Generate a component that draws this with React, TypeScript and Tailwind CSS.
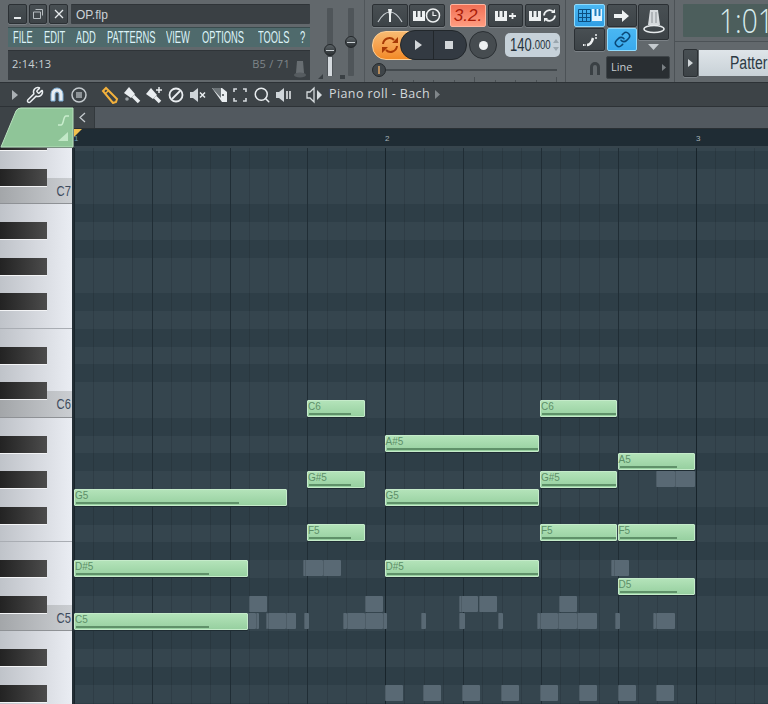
import type { ReactNode } from 'react';
import { Link, Search, Wrench } from 'lucide-react';

const STEP = 19.44;
const GRID_X = 74;
const GRID_Y = 148;

// semitones that get the lighter band, C = 0
const LIGHT = [0, 1, 3, 5, 7, 8, 10];

// top row is D#7, clipped by the ruler
const rows = Array.from({ length: 32 }, (_, i) => ((3 - i) % 12 + 12) % 12);

const whiteKeys = [
  { h: 'h-[29.5px]' },
  { h: 'h-[26.7px]', label: 'C7' },
  { h: 'h-[26.7px]' },
  { h: 'h-[35.6px]' },
  { h: 'h-[35.6px]' },
  { h: 'h-[26.7px]', line: true },
  { h: 'h-[26.7px]' },
  { h: 'h-[35.6px]' },
  { h: 'h-[26.7px]', label: 'C6' },
  { h: 'h-[26.7px]' },
  { h: 'h-[35.6px]' },
  { h: 'h-[35.6px]' },
  { h: 'h-[26.7px]', line: true },
  { h: 'h-[26.7px]' },
  { h: 'h-[35.6px]' },
  { h: 'h-[26.7px]', label: 'C5' },
  { h: 'h-[26.7px]' },
  { h: 'h-[35.6px]' },
  { h: 'h-[35.6px]' },
];

const blackTops = [133, 168.6, 221.9, 257.5, 293.1, 346.5, 382.1, 435.5, 471.1, 506.7, 560.1, 595.7, 649, 684.6];

const notes = [
  { n: 'G5', x: 74, r: 287, y: 488.6, v: 239 },
  { n: 'D#5', x: 74, r: 248, y: 560, v: 209 },
  { n: 'C5', x: 74, r: 248, y: 613.4, v: 209 },
  { n: 'C6', x: 307, r: 365, y: 400, v: 351 },
  { n: 'G#5', x: 307, r: 365, y: 471, v: 351 },
  { n: 'F5', x: 307, r: 365, y: 524.4, v: 351 },
  { n: 'A#5', x: 384.5, r: 539, y: 435.2, v: 538 },
  { n: 'G5', x: 384.5, r: 539, y: 488.6, v: 538 },
  { n: 'D#5', x: 384.5, r: 539, y: 560, v: 538 },
  { n: 'C6', x: 540, r: 617, y: 400, v: 616 },
  { n: 'G#5', x: 540, r: 617, y: 471, v: 616 },
  { n: 'F5', x: 540, r: 617, y: 524.4, v: 616 },
  { n: 'A5', x: 617.5, r: 695, y: 453, v: 677 },
  { n: 'F5', x: 617.5, r: 695, y: 524.4, v: 677 },
  { n: 'D5', x: 617.5, r: 695, y: 577.8, v: 677 },
];

// x, width, y of the ghost notes from the other channels
const ghosts = [
  [656, 19, 471], [675, 20, 471],
  [303, 3, 560], [305, 18, 560], [323, 18, 560], [611, 6, 560], [614, 15, 560],
  [249, 18, 595.6], [365, 18, 595.6], [459, 3, 595.6], [461, 17, 595.6], [479, 18, 595.6], [559, 18, 595.6],
  [248, 8, 613.4], [256, 3, 613.4], [266, 2, 613.4], [268, 18, 613.4], [286, 10, 613.4], [304, 5, 613.4],
  [343, 4, 613.4], [347, 18, 613.4], [365, 18, 613.4], [383, 4, 613.4], [421, 5, 613.4], [459, 6, 613.4],
  [498, 5, 613.4], [537, 3, 613.4], [540, 18, 613.4], [558, 19, 613.4], [577, 20, 613.4], [615, 5, 613.4],
  [653, 3, 613.4], [656, 19, 613.4],
  [384.5, 18, 684.6], [423, 18, 684.6], [462, 18, 684.6], [501, 18, 684.6], [540, 18, 684.6], [578.5, 18, 684.6], [617.5, 18, 684.6], [656, 18, 684.6],
];

const menu = [
  ['FILE', 'w-[31px]'],
  ['EDIT', 'w-[32px]'],
  ['ADD', 'w-[31px]'],
  ['PATTERNS', 'w-[59px]'],
  ['VIEW', 'w-[36px]'],
  ['OPTIONS', 'w-[56px]'],
  ['TOOLS', 'w-[42px]'],
  ['?', 'w-[10px]'],
];

function Btn({ className = '', children }: { className?: string; children?: ReactNode }) {
  return (
    <div className={`flex items-center justify-center rounded-[2px] border border-[#2b3034] bg-gradient-to-b from-[#484f53] to-[#3d4347] shadow-[0_1px_0_#7a8085] ${className}`}>
      {children}
    </div>
  );
}

function Comb() {
  return <path fill="#eef1f2" d="M0 4h3v6h1.500V4h3v6H9V4h3v10H0z" />;
}

function ToolIcon({ children, w = 18 }: { children: ReactNode; w?: number }) {
  return (
    <svg width={w} height={18} viewBox={`0 0 ${w} 18`} className="flex-none">
      {children}
    </svg>
  );
}

function Toolbar() {
  const white = '#e9edf0';
  return (
    <div className="flex h-[24px] flex-none items-center border-b border-[#2d3236] bg-[#3d4347] pl-[12px]">
      <svg width="6" height="10" viewBox="0 0 6 10"><path d="M0 0l6 5-6 5z" fill="#aab0b4" /></svg>
      <div className="ml-[8px] flex items-center gap-[4px]">
        <Wrench size={18} color={white} strokeWidth={2} className="flex-none" />
        <ToolIcon>
          <path d="M3 15V8a6 6 0 0 1 12 0v7h-4V8a2 2 0 0 0-4 0v7z" fill={white} stroke="#7fb2dc" strokeWidth="1" />
        </ToolIcon>
        <ToolIcon>
          <circle cx="9" cy="9" r="7" fill="none" stroke="#c4cace" strokeWidth="1.500" />
          <rect x="6" y="6" width="6" height="6" fill="#8e9498" />
        </ToolIcon>
      </div>
      <div className="ml-[13px] flex items-center gap-[4px]">
        <ToolIcon>
          <path d="M2 5l3-3 11 11-1 3-3 1z" fill="none" stroke="#f3b13c" strokeWidth="2" />
          <path d="M4.500 7.500l3-3" stroke="#f3b13c" strokeWidth="1.500" />
        </ToolIcon>
        <ToolIcon>
          <path d="M1 7l5-6 6 7-4 4z" fill={white} />
          <path d="M10 10l6 6" stroke={white} strokeWidth="3.500" />
          <circle cx="4" cy="13" r="1.800" fill="#9aa0a4" />
        </ToolIcon>
        <ToolIcon>
          <path d="M1 8l5-6 6 7-4 4z" fill={white} />
          <path d="M10 11l5 5" stroke={white} strokeWidth="3.500" />
          <path d="M14 1v6M11 4h6" stroke={white} strokeWidth="1.500" />
        </ToolIcon>
        <ToolIcon>
          <circle cx="9" cy="9" r="6.500" fill="none" stroke={white} strokeWidth="1.800" />
          <path d="M5 13l8-8" stroke={white} strokeWidth="1.800" />
        </ToolIcon>
        <ToolIcon>
          <path d="M1 6h3l5-4v14l-5-4H1z" fill="#cfd5d9" />
          <path d="M11 6.500l5 5M16 6.500l-5 5" stroke={white} strokeWidth="1.500" />
        </ToolIcon>
        <ToolIcon>
          <path d="M1 2h10l5 4v10h-5z" fill={white} />
          <path d="M1 2h9v10z" fill="#6d7478" />
          <circle cx="12" cy="9" r="1" fill="#3d4347" />
        </ToolIcon>
        <div className="-ml-[2px]">
          <ToolIcon>
            <path d="M3 6V3h3M12 3h3v3M15 12v3h-3M6 15H3v-3" fill="none" stroke="#d5dade" strokeWidth="1.600" />
          </ToolIcon>
        </div>
        <Search size={18} color={white} strokeWidth={2} className="flex-none" />
        <ToolIcon>
          <path d="M1 6h3l5-4v14l-5-4H1z" fill="#cfd5d9" />
          <path d="M12 5v8M15 5v8" stroke={white} strokeWidth="1.500" />
        </ToolIcon>
      </div>
      <svg width="16" height="18" viewBox="0 0 16 18" className="ml-[13px] flex-none">
        <path d="M1 6h3l4-4v14l-4-4H1z" fill="none" stroke="#d6dbde" strokeWidth="1.300" />
        <path d="M11 4l5 5-5 5z" fill="#d6dbde" />
      </svg>
      <span className="ml-[7px] font-['Open_Sans',sans-serif] text-[12.500px] tracking-[0.4px] whitespace-nowrap text-[#d3d8db]">
        Piano roll - Bach
      </span>
      <svg width="5" height="9" viewBox="0 0 5 9" className="ml-[5px]"><path d="M0 0l5 4.500-5 4.500z" fill="#80868a" /></svg>
    </div>
  );
}

function Fader({ knobTop, fill }: { knobTop: string; fill?: boolean }) {
  return (
    <div className="relative flex h-[68px] w-[6px] justify-center rounded-[1px] bg-[#4f5559]">
      {fill && <div className="absolute inset-x-[1px] bottom-0 h-[19px] bg-[#d5dade]" />}
      <div className={`absolute left-1/2 -ml-[6px] h-[12px] w-[12px] rounded-full border border-[#24282b] bg-gradient-to-b from-[#5a6165] to-[#2c3134] ${knobTop}`}>
        <div className="mx-auto mt-[4.500px] h-px w-[8px] bg-[#c8ced2]" />
      </div>
    </div>
  );
}

function TopPanel() {
  return (
    <div className="flex h-[83px] flex-none border-b border-[#2d3236] bg-[#62686c]">
      {/* title, menu and hint panel */}
      <div className="flex w-[319px] flex-none flex-col gap-[3px] pt-[4px] pl-[8px]">
        <div className="flex h-[20px] gap-[2px]">
          <Btn className="w-[19px]"><div className="mt-[7px] h-[2px] w-[7px] bg-[#e6eaec]" /></Btn>
          <Btn className="w-[18px]">
            <svg width="10" height="10" viewBox="0 0 10 10"><path d="M2.500.5h7v6M.5 3h7v6.500h-7z" fill="none" stroke="#b6bcc0" /></svg>
          </Btn>
          <Btn className="w-[19px]">
            <svg width="10" height="10" viewBox="0 0 10 10"><path d="M1 1l8 8M9 1l-8 8" stroke="#e6eaec" strokeWidth="1.300" /></svg>
          </Btn>
          <div className="ml-[1px] flex w-[239px] items-center rounded-[1px] border-t border-[#2f3438] bg-[#3a4044] pl-[5px] font-['Liberation_Sans',sans-serif] text-[12px] text-[#ccd3d7]">
            OP.flp
          </div>
        </div>
        <div className="flex h-[20px] w-[302px] items-center border-t border-[#3a4c4e] bg-[#4f6a6c] pl-[5px] font-['Liberation_Sans',sans-serif] text-[17px] text-[#dcf3f8]">
          {menu.map(([label, w]) => (
            <div key={label} className={`${w} flex-none whitespace-nowrap`}>
              <span className="inline-block origin-left scale-x-[0.55]">{label}</span>
            </div>
          ))}
        </div>
        <div className="flex h-[30px] w-[302px] items-center border-t border-[#2f3438] bg-[#3a4044] pr-[4px] pb-[2px] pl-[4px] font-['Open_Sans',sans-serif] text-[11px] tracking-[0.3px]">
          <span className="text-[#c9d0d4]">2:14:13</span>
          <span className="mr-[4px] ml-auto text-[#7f868a]">B5 / 71</span>
          <svg width="12" height="18" viewBox="0 0 12 18" className="mt-[8px]">
            <path d="M3 1h6l1 12H2z" fill="#686e72" />
            <ellipse cx="6" cy="15" rx="6" ry="2.500" fill="#565c60" />
          </svg>
        </div>
      </div>

      {/* master sliders */}
      <div className="relative flex w-[46px] flex-none gap-[15px] border-r border-[#50565a] pt-[8px] pl-[8px]">
        <Fader knobTop="top-[36px]" fill />
        <Fader knobTop="top-[28px]" />
        <svg width="5" height="5" viewBox="0 0 5 5" className="absolute bottom-[3px] -left-[1px]"><path d="M5 0v5H0z" fill="#3a4044" /></svg>
        <div className="absolute bottom-[3px] left-[21px] h-[4px] w-[5px] bg-[#3a4044]" />
      </div>

      {/* transport */}
      <div className="flex w-[201px] flex-none flex-col border-r border-[#4c5256] pt-[4px] pl-[7px]">
        <div className="flex h-[23px]">
          <Btn className="w-[36px]">
            <svg width="28" height="16" viewBox="0 0 28 16">
              <path d="M2 14C6 7 10 4 14 4s8 3 12 10" fill="none" stroke="#c6ccd0" strokeWidth="1.200" />
              <path d="M12 1h4l-1 6v7h-2V7z" fill="#eef1f2" />
            </svg>
          </Btn>
          <Btn className="ml-[1px] w-[36px]">
            <svg width="28" height="17" viewBox="0 0 28 17">
              <Comb />
              <circle cx="20" cy="8.500" r="6.500" fill="none" stroke="#eef1f2" strokeWidth="1.500" />
              <path d="M20 4.500v4h3.500" fill="none" stroke="#eef1f2" strokeWidth="1.200" />
            </svg>
          </Btn>
          <div className="ml-[5px] flex w-[36px] items-center justify-center rounded-[2px] border border-[#ffb6a0] bg-gradient-to-b from-[#ef6f55] to-[#ff9c80] font-['Liberation_Sans',sans-serif] text-[17px] text-[#a81c08] italic">
            3.2.
          </div>
          <Btn className="ml-[2px] w-[35px]">
            <svg width="22" height="17" viewBox="0 0 22 17">
              <Comb />
              <path d="M14 9h7M17.500 6v6" stroke="#eef1f2" strokeWidth="1.800" />
            </svg>
          </Btn>
          <Btn className="ml-[2px] w-[35px]">
            <svg width="28" height="17" viewBox="0 0 28 17">
              <Comb />
              <path d="M15 8.500a5.500 5.500 0 0 1 9-4M26 8.500a5.500 5.500 0 0 1-9 4" fill="none" stroke="#eef1f2" strokeWidth="1.800" />
              <path d="M22 6h4V2zM19 11h-4v4z" fill="#eef1f2" />
            </svg>
          </Btn>
        </div>

        <div className="mt-[3px] flex h-[30px] items-center">
          <div className="flex h-[29px] w-[40px] flex-none items-center rounded-l-[14px] border border-[#ffcf95] bg-gradient-to-b from-[#f8ba70] to-[#f28a24] pl-[8px]">
            <svg width="18" height="18" viewBox="0 0 18 18">
              <path d="M2 8a6.500 6.500 0 0 1 11-4M16 10a6.500 6.500 0 0 1-11 4" fill="none" stroke="#a83a06" strokeWidth="2" />
              <path d="M11 7h6V1zM7 11H1v6z" fill="#a83a06" />
            </svg>
          </div>
          <div className="z-10 -ml-[12px] flex h-[30px] w-[67px] flex-none rounded-[15px] border border-[#22272b] bg-[#333a42]">
            <div className="flex w-[33px] items-center justify-center border-r border-[#22272b] pl-[2px]">
              <svg width="7" height="10" viewBox="0 0 7 10"><path d="M0 0l7 5-7 5z" fill="#d2d6d9" /></svg>
            </div>
            <div className="flex flex-1 items-center justify-center pr-[2px]">
              <div className="h-[8px] w-[8px] bg-[#d2d6d9]" />
            </div>
          </div>
          <div className="ml-[2px] flex h-[28px] w-[28px] flex-none items-center justify-center rounded-full border border-[#2a2f33] bg-[#464c50]">
            <div className="h-[9px] w-[9px] rounded-full bg-[#eef1f2]" />
          </div>
          <div className="ml-[8px] flex h-[24px] w-[55px] flex-none items-center rounded-[5px] bg-[#c6d1d9] pl-[5px] font-['Liberation_Sans',sans-serif] text-[#25323c]">
            <span className="w-[22px] flex-none origin-left scale-x-[0.72] text-[18px] whitespace-nowrap">140</span>
            <span className="w-[21px] flex-none origin-left scale-x-[0.8] text-[12px] whitespace-nowrap">.000</span>
            <svg width="6" height="14" viewBox="0 0 6 14"><path d="M3 1l3 4H0zM3 13l3-4H0z" fill="#9aa6ae" /></svg>
          </div>
        </div>

        <div className="mt-[2px] flex h-[15px] items-center">
          <div className="h-[14px] w-[14px] flex-none rounded-full border border-[#25292c] bg-[#3f4549]">
            <div className="mx-auto mt-[2px] h-[8px] w-[1.500px] bg-[#b58a5a]" />
          </div>
          <div className="h-[2px] w-[171px] bg-[#43494d]" />
        </div>
        <div className="ml-[20px] flex w-[165px] items-end justify-between">
          {[1, 2, 3, 4, 5, 6, 7, 8, 9].map((t) => (
            <div key={t} className={`w-px bg-[#4a5054] ${t === 5 || t === 9 ? 'h-[5px]' : 'h-[2px]'}`} />
          ))}
        </div>
      </div>

      {/* snap and tool options */}
      <div className="flex w-[109px] flex-none flex-col border-r border-[#4c5256] pt-[4px] pl-[8px]">
        <div className="flex gap-[1px]">
          <div className="flex flex-none flex-col gap-[1px]">
            <div className="flex gap-[2px]">
              <div className="flex h-[23px] w-[31px] items-center justify-center rounded-[2px] border border-[#8fdcff] bg-gradient-to-b from-[#4ab7f2] to-[#2f9ee4]">
                <svg width="24" height="13" viewBox="0 0 24 13">
                  <path d="M.5.500h12v12H.5zM.5 4.500h12M.5 8.500h12M4.500.500v12M8.500.500v12" fill="none" stroke="#0c4f80" />
                  <path d="M14 0h10v12H14z" fill="#e4f4ff" />
                  <path d="M16.500 0h2v7h-2zM20.500 0h2v7h-2z" fill="#1e7ec0" />
                </svg>
              </div>
              <Btn className="h-[23px] w-[30px]">
                <svg width="16" height="14" viewBox="0 0 16 14"><path d="M0 5h8V1l7 6-7 6V9H0z" fill="#eef1f2" /></svg>
              </Btn>
            </div>
            <div className="flex gap-[2px]">
              <Btn className="h-[23px] w-[31px]">
                <svg width="16" height="14" viewBox="0 0 16 14">
                  <path d="M1 12h3" stroke="#eef1f2" strokeWidth="2" strokeDasharray="1.500 1" />
                  <path d="M5 12c3 0 4-2 5-4l1-3" fill="none" stroke="#eef1f2" strokeWidth="2.500" />
                  <path d="M14 1v5" stroke="#eef1f2" strokeWidth="1.500" strokeDasharray="2 1" />
                </svg>
              </Btn>
              <div className="flex h-[23px] w-[30px] items-center justify-center rounded-[2px] border border-[#8fdcff] bg-gradient-to-b from-[#4ab7f2] to-[#39aaee]">
                <Link size={17} color="#0a4878" strokeWidth={2.200} />
              </div>
            </div>
          </div>
          <div className="flex flex-none flex-col items-center">
            <Btn className="h-[36px] w-[31px]">
              <svg width="22" height="28" viewBox="0 0 22 28">
                <path d="M7 2h8l2 15H5z" fill="#d6dadd" />
                <path d="M9 4v11M13 4v11" stroke="#8a9094" />
                <ellipse cx="11" cy="21" rx="10" ry="3.500" fill="none" stroke="#e6eaec" strokeWidth="1.500" />
              </svg>
            </Btn>
            <svg width="11" height="6" viewBox="0 0 11 6" className="mt-[4px]"><path d="M0 0h11L5.500 6z" fill="#c4cace" /></svg>
          </div>
        </div>
        <div className="mt-[5px] flex items-center">
          <svg width="12" height="14" viewBox="0 0 12 14" className="ml-[15px]">
            <path d="M1 14V6a5 5 0 0 1 10 0v8H8V6a2 2 0 0 0-4 0v8z" fill="#3a4044" />
          </svg>
          <div className="ml-[5px] flex h-[23px] w-[64px] items-center rounded-[2px] border border-[#3e4448] bg-[#292e32] pr-[3px] pl-[4px] font-['Open_Sans',sans-serif] text-[11px] text-[#c6ccd0]">
            Line
            <svg width="4" height="7" viewBox="0 0 4 7" className="ml-auto"><path d="M0 0l4 3.500L0 7z" fill="#7a8084" /></svg>
          </div>
        </div>
      </div>

      {/* clock and pattern picker */}
      <div className="flex min-w-0 flex-1 flex-col pt-[4px] pl-[8px]">
        <div className="h-[33px] overflow-hidden rounded-l-[1px] bg-[#4c5e5c] pl-[36px] font-['Open_Sans',sans-serif] text-[33px] leading-[33px] font-light whitespace-nowrap text-[#d8ecee]">
          <span className="inline-block origin-left scale-x-[0.85]">1:01</span>
        </div>
        <div className="-ml-[8px] mt-[4px] h-px bg-[#4c5256]" />
        <div className="mt-[7px] flex h-[28px] items-center">
          <Btn className="h-[28px] w-[15px] flex-none">
            <svg width="5" height="8" viewBox="0 0 5 8"><path d="M0 0l5 4-5 4z" fill="#d0d5d8" /></svg>
          </Btn>
          <div className="ml-[1px] flex h-[26px] min-w-0 flex-1 items-center overflow-hidden bg-gradient-to-b from-[#dfe5e9] to-[#c8d1d7] pl-[31px] font-['Liberation_Sans',sans-serif] text-[18px] whitespace-nowrap text-[#2d3a44]">
            <span className="inline-block origin-left scale-x-[0.78]">Pattern 1</span>
          </div>
        </div>
      </div>
    </div>
  );
}

function RollHeader() {
  return (
    <div className="flex h-[41px] flex-none bg-[#3d4347]">
      <div className="relative h-full w-[74px] flex-none">
        <svg width="74" height="41" viewBox="0 0 74 41" className="absolute inset-0">
          <path d="M1 40L16 4Q17.500 1 21 1H73V40Z" fill="#8fc598" stroke="#b9e2bf" strokeWidth="1" />
          <path d="M58 18h3c3 0 2-9 5-9h3" fill="none" stroke="#c9edcd" strokeWidth="1.500" />
          <path d="M58 34l10-9v9z" fill="#c2e8c7" />
        </svg>
      </div>
      <div className="flex min-w-0 flex-1 flex-col">
        <div className="flex h-[21px] flex-none">
          <div className="flex w-[20px] flex-none items-center justify-center bg-[#3f4549] pr-[3px]">
            <svg width="7" height="11" viewBox="0 0 7 11"><path d="M6 1L1 5.500 6 10" fill="none" stroke="#c4cace" strokeWidth="1.300" /></svg>
          </div>
          <div className="flex-1 border-l border-[#33393d] bg-[#52595f]" />
        </div>
        <div className="relative flex h-[18px] flex-none items-end border-t border-[#2a3034] bg-[#1f2c34] pb-[2px] font-['Liberation_Sans',sans-serif] text-[8px] leading-[11px] text-[#a8b4ba]">
          <span className="w-[311px] flex-none text-[#6f9ab0]">1</span>
          <span className="w-[311px] flex-none">2</span>
          <span className="flex-none">3</span>
          <svg width="8" height="8" viewBox="0 0 8 8" className="absolute top-0 left-0"><path d="M0 0h8L0 8z" fill="#f2c04e" /></svg>
        </div>
        <div className="h-[2px] flex-none bg-[#37454d]" />
      </div>
    </div>
  );
}

function Keys() {
  return (
    <div className="relative h-full w-[72px] flex-none overflow-hidden">
      <div className="flex flex-col">
        {whiteKeys.map((key, i) =>
          key.label ? (
            <div
              key={i}
              className={`${key.h} flex-none border-b border-[#8e9195] bg-gradient-to-r from-[#a3a6a9] to-[#cbced2] pt-[5px] pr-[1px] text-right leading-[14px]`}
            >
              <span className="inline-block origin-right scale-x-[0.8] font-['Liberation_Sans',sans-serif] text-[14px] leading-[14px] text-[#3d4a5c]">
                {key.label}
              </span>
            </div>
          ) : (
            <div
              key={i}
              className={`${key.h} flex-none border-b bg-gradient-to-r from-[#bfc3c9] via-[#d5d8de] to-[#eaedf3] ${key.line ? 'border-[#a9adb3]' : 'border-transparent'}`}
            />
          ),
        )}
      </div>
      {blackTops.map((top) => (
        <div
          key={top}
          className="absolute left-0 h-[18px] w-[47px] border-b border-[#f3f4f6] bg-gradient-to-r from-[#232323] to-[#4c4c4c]"
          style={{ top: top - GRID_Y }}
        />
      ))}
    </div>
  );
}

function Note({ n, x, r, y, v }: (typeof notes)[number]) {
  return (
    <div
      className="absolute h-[17px] rounded-[1px] border border-[#c5ebca] bg-gradient-to-b from-[#b3e3b9] to-[#97d0a0] font-['Liberation_Sans',sans-serif] text-[10px] leading-[12px] text-[#5d8f68] shadow-[0_1px_0_#1f2c33]"
      style={{ left: x - GRID_X, top: y - GRID_Y, width: r - x }}
    >
      {n}
      <div className="absolute bottom-[1px] left-[1px] h-[2px] bg-[#5f9169]" style={{ width: v - x - 2 }} />
    </div>
  );
}

function Grid() {
  return (
    <div className="relative h-full min-w-0 flex-1 overflow-hidden bg-[#2e3e47]">
      <div className="flex flex-col">
        {rows.map((pc, i) => (
          <div
            key={i}
            className={`${i === 0 ? 'h-[2.800px]' : 'h-[17.800px]'} flex-none ${LIGHT.includes(pc) ? 'bg-[#35454e]' : 'bg-[#2e3e47]'}`}
          />
        ))}
      </div>
      <div className="absolute inset-0 flex">
        {Array.from({ length: 36 }, (_, i) => (
          <div
            key={i}
            className={`h-full flex-none border-l ${
              i % 16 === 0 ? 'border-[#18242b]' : i % 4 === 0 ? 'border-[#202d35]' : 'border-black/10'
            }`}
            style={{ width: STEP }}
          />
        ))}
      </div>
      {ghosts.map(([x, w, y], i) => (
        <div
          key={i}
          className="absolute h-[16px] rounded-[1px] border-l border-[#4d5c66] bg-[#596974]"
          style={{ left: x - GRID_X, top: y - GRID_Y, width: w }}
        />
      ))}
      {notes.map((note, i) => (
        <Note key={i} {...note} />
      ))}
    </div>
  );
}

export default function App() {
  return (
    <div className="flex h-[704px] w-[768px] flex-col overflow-hidden bg-[#3d4347]">
      <TopPanel />
      <Toolbar />
      <RollHeader />
      <div className="flex min-h-0 flex-1">
        <Keys />
        <div className="w-[2px] flex-none bg-[#232e35]" />
        <Grid />
      </div>
    </div>
  );
}
